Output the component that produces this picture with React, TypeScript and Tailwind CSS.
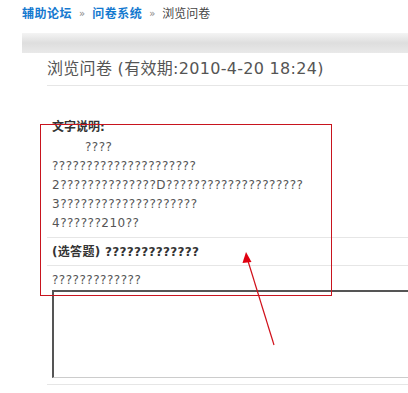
const FONT = "font-['DejaVu_Sans','Noto_Sans_CJK_SC',sans-serif]";

const BREADCRUMB = [
  { label: '辅助论坛', link: true },
  { label: '问卷系统', link: true },
  { label: '浏览问卷', link: false },
];

const DESCRIPTION = [
  '2??????????????D????????????????????',
  '3????????????????????',
  '4??????210??',
];

const App = () => {
  return (
    <div
      className={`relative w-[408px] h-[393px] overflow-hidden bg-white text-[12px] text-[#444] ${FONT}`}
    >
      {/* breadcrumb */}
      <div className="flex items-center h-[28px] pl-[22px] pb-[1px]">
        {BREADCRUMB.map((b, i) => (
          <span key={b.label} className="flex items-center">
            {i > 0 && (
              <span className="px-[7px] text-[10px] text-[#888]">»</span>
            )}
            <span
              className={
                b.link
                  ? 'font-bold text-[#1479cf] tracking-[0.5px]'
                  : 'text-[#444]'
              }
            >
              {b.label}
            </span>
          </span>
        ))}
      </div>

      <div className="ml-[22px] mt-[5px]">
        <div className="h-[20px] bg-gradient-to-b from-[#f4f4f4] via-[#dedede] to-[#e9e9e9]" />

        <div className="pl-[25px]">
          <div className="h-[33px] flex items-center border-b border-[#e6e6e6]">
            <h1 className="text-[16px] font-normal text-[#555] leading-none pb-[1px] tracking-[0.3px]">
              浏览问卷&nbsp;(有效期:2010-4-20 18:24)
            </h1>
          </div>

          {/* description */}
          <div className="pt-[31px] pb-[4px] pl-[5px] border-b border-[#e6e6e6]">
            <div className="h-[21px] leading-[21px] font-bold text-[#333]">
              文字说明:
            </div>
            <div className="leading-[19px] tracking-[0.5px] text-[#555]">
              <div className="pl-[33px]">????</div>
              <div>?????????????????????</div>
              {DESCRIPTION.map((line) => (
                <div key={line}>{line}</div>
              ))}
            </div>
          </div>

          {/* question */}
          <div className="h-[28px] flex items-center pl-[5px] border-b border-[#e6e6e6]">
            <span className="font-bold text-[#333] tracking-[0.3px]">
              (选答题) ?????????????
            </span>
          </div>

          <div className="pt-[5px] pb-[6px] pl-[5px] border-b border-[#e6e6e6]">
            <div className="leading-[19px] tracking-[0.5px] text-[#555]">
              ?????????????
            </div>
            <div className="w-[420px] h-[88px] border-l-2 border-t-2 border-b border-l-[#555] border-t-[#555] border-b-[#ccc]" />
          </div>
        </div>
      </div>

      {/* red annotation */}
      <div className="absolute left-[40px] top-[124px] w-[292px] h-[172px] border border-[#c8141e]" />
      <svg
        className="absolute left-0 top-0"
        width="408"
        height="393"
        viewBox="0 0 408 393"
      >
        <line
          x1="274"
          y1="345"
          x2="248"
          y2="261"
          stroke="#d0101a"
          strokeWidth="1.2"
        />
        <polygon points="246,252 242.5,263 251.5,262" fill="#e00010" />
      </svg>
    </div>
  );
};

export default App;
